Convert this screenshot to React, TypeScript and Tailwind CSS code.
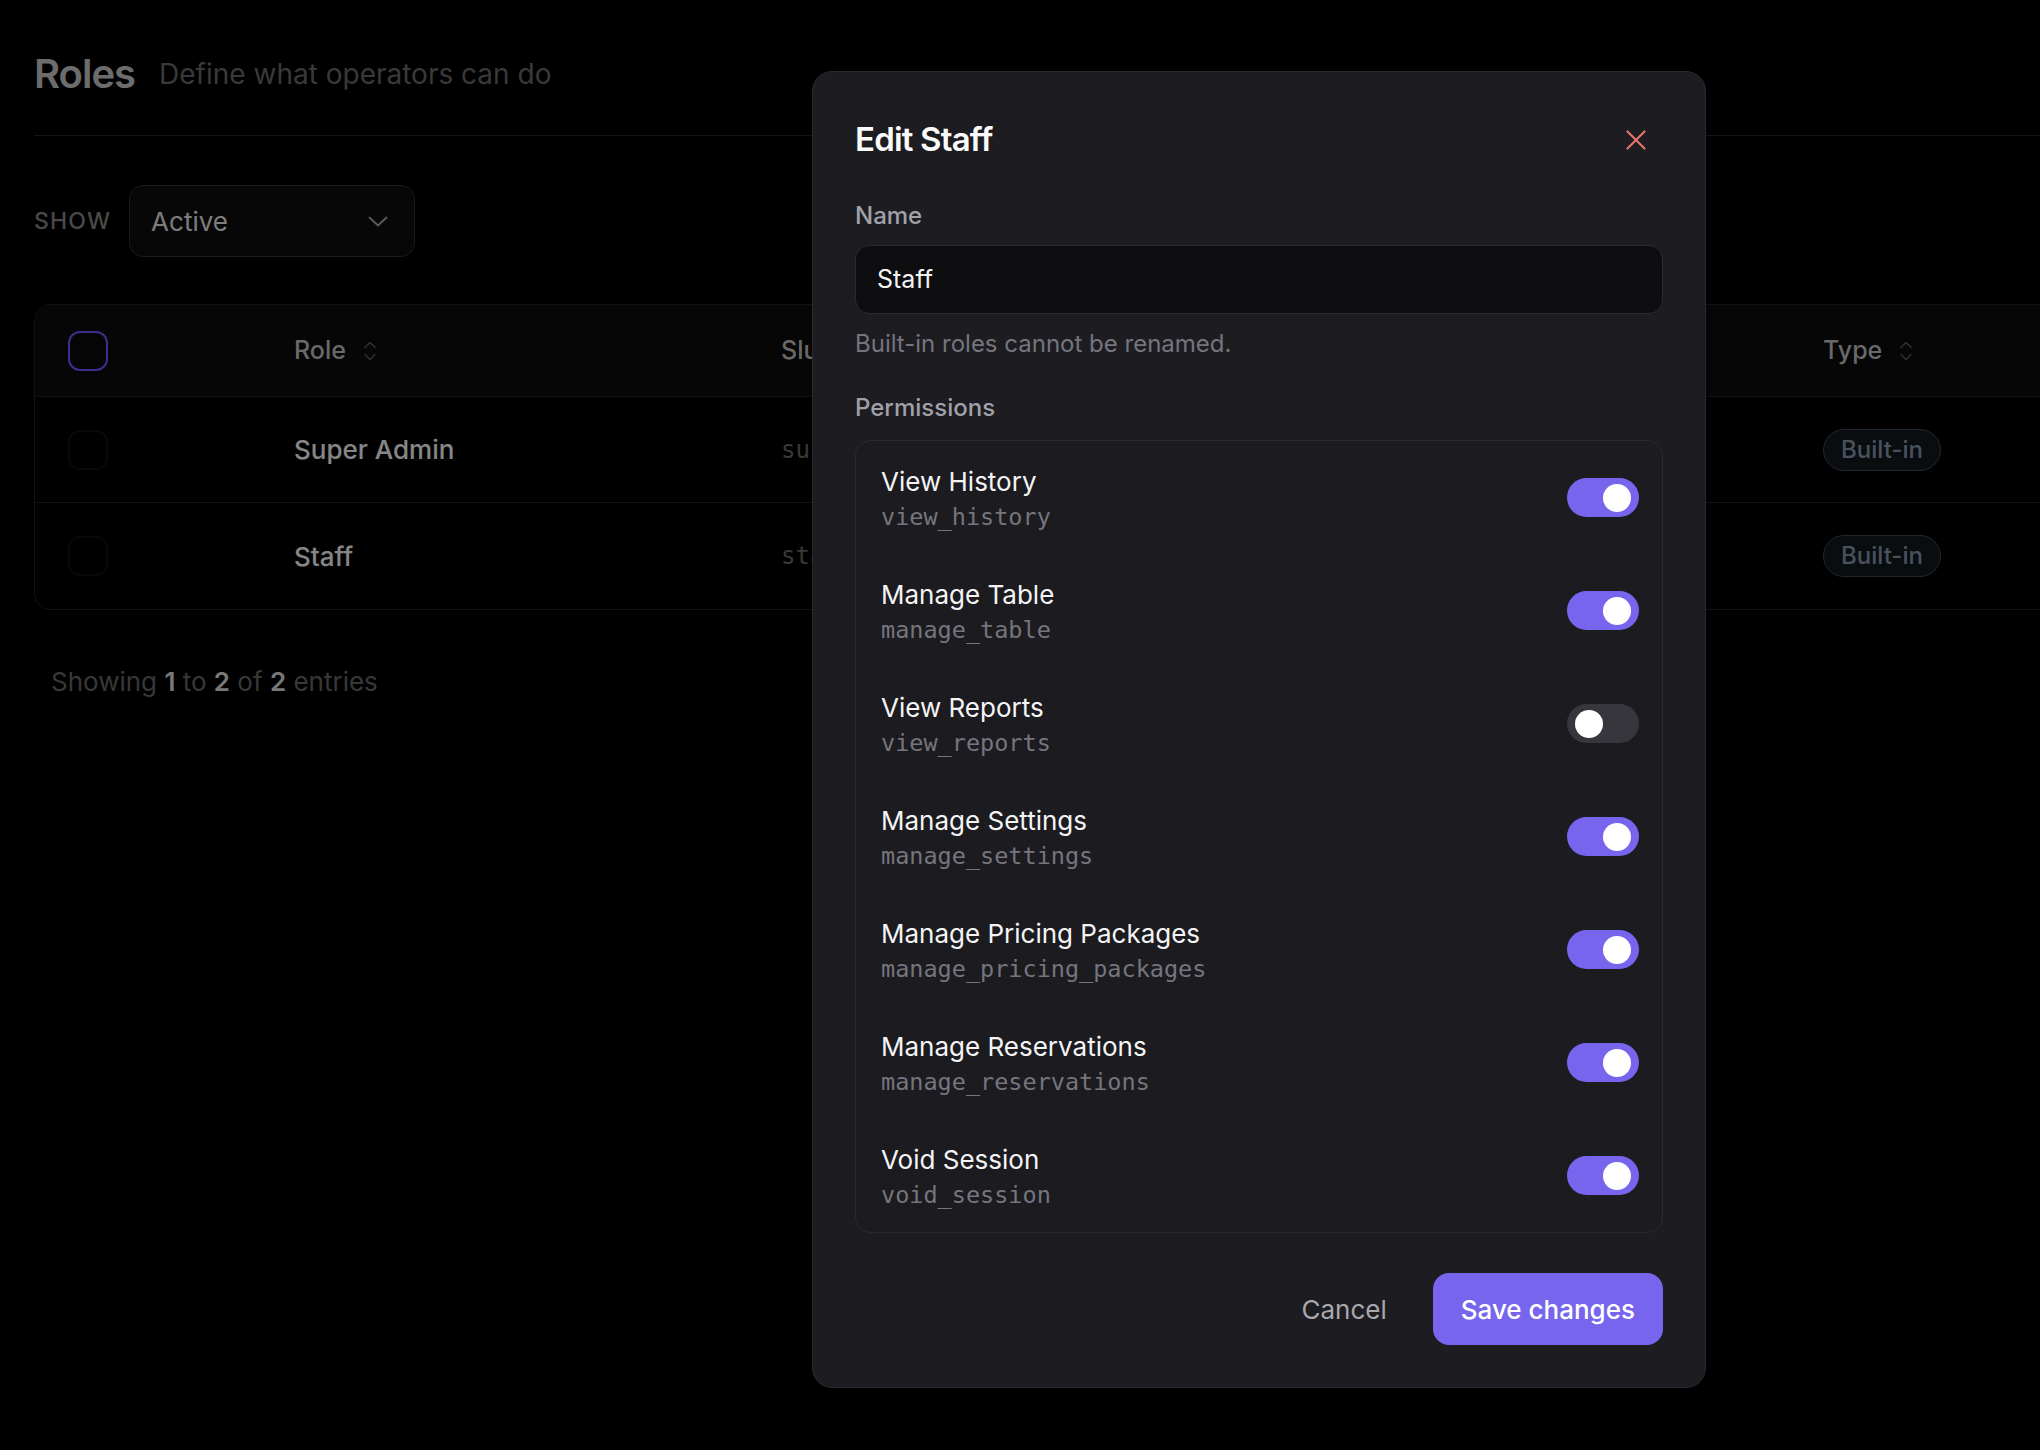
import React, { useState } from 'react';

const perms = [
    { label: 'View History', key: 'view_history', on: true },
    { label: 'Manage Table', key: 'manage_table', on: true },
    { label: 'View Reports', key: 'view_reports', on: false },
    { label: 'Manage Settings', key: 'manage_settings', on: true },
    { label: 'Manage Pricing Packages', key: 'manage_pricing_packages', on: true },
    { label: 'Manage Reservations', key: 'manage_reservations', on: true },
    { label: 'Void Session', key: 'void_session', on: true },
];

const roles = [
    { name: 'Super Admin', slug: 'super_admin' },
    { name: 'Staff', slug: 'staff' },
];

const SortIcon = () => (
    <svg width="16" height="24" viewBox="0 0 16 24" fill="none" stroke="currentColor" strokeWidth="1.6" strokeLinecap="round" strokeLinejoin="round">
        <path d="M3 8.5 8 3.5l5 5" />
        <path d="M3 15.5l5 5 5-5" />
    </svg>
);

const Toggle: React.FC<{ on: boolean; onClick: () => void }> = ({ on, onClick }) => (
    <button
        onClick={onClick}
        className={`w-[72px] h-[39px] rounded-full flex items-center px-[8px] shrink-0 ${on ? 'bg-[#7765ee] justify-end' : 'bg-[#36363c] justify-start'}`}
    >
        <span className="block w-[28px] h-[28px] rounded-full bg-white" />
    </button>
);

const App: React.FC = () => {
    const [state, setState] = useState(perms.map(p => p.on));

    return (
        <div className="relative w-[2040px] h-[1450px] overflow-hidden bg-black font-['Inter',sans-serif]">
            {/* page behind the dialog */}
            <div className="w-[2200px] pl-[34px]">
                <div className="flex items-center gap-[24px] pt-[50px] pb-[37px] border-b border-[#222]">
                    <h1 className="text-[40px] leading-[48px] font-semibold text-[#b4b4b4] tracking-tight">Roles</h1>
                    <p className="text-[28px] leading-[48px] text-[#606060]">Define what operators can do</p>
                </div>

                <div className="flex items-center gap-[18px] mt-[49px]">
                    <span className="text-[23px] tracking-wider text-[#7b7b7b] font-medium">SHOW</span>
                    <div className="w-[286px] h-[72px] rounded-[14px] border-[1.5px] border-[#2c2c2c] bg-[#0d0d0d] flex items-center justify-between pl-[21px] pr-[26px]">
                        <span className="text-[26px] text-[#d0d0d0]">Active</span>
                        <svg width="20" height="11" viewBox="0 0 20 11" fill="none" stroke="#969696" strokeWidth="1.8" strokeLinecap="round" strokeLinejoin="round">
                            <path d="M1.5 1.5 10 9.5l8.5-8" />
                        </svg>
                    </div>
                </div>

                <div className="mt-[47px] rounded-[16px] border-[1.5px] border-[#1e1e1e] overflow-hidden">
                    <div className="grid grid-cols-[259px_487px_1042px_1fr] items-center h-[92px] bg-[#0a0a0a] border-b-[1.5px] border-[#1e1e1e]">
                        <div className="pl-[33px]">
                            <div className="w-[40px] h-[40px] rounded-[12px] border-2 border-[#6050e8]" />
                        </div>
                        <div className="flex items-center gap-[16px] text-[25px] font-medium text-[#b0b0b0]">
                            Role <span className="text-[#505050]"><SortIcon /></span>
                        </div>
                        <div className="text-[25px] font-medium text-[#b0b0b0]">Slug</div>
                        <div className="flex items-center gap-[16px] text-[25px] font-medium text-[#b0b0b0]">
                            Type <span className="text-[#505050]"><SortIcon /></span>
                        </div>
                    </div>
                    {roles.map((r, i) => (
                        <div key={r.slug} className={`grid grid-cols-[259px_487px_1042px_1fr] items-center h-[106px] ${i === 0 ? 'border-b-[1.5px] border-[#1e1e1e]' : ''}`}>
                            <div className="pl-[33px]">
                                <div className="w-[40px] h-[40px] rounded-[12px] border-2 border-[#101010]" />
                            </div>
                            <div className="text-[26px] font-medium text-[#e0e0e0]">{r.name}</div>
                            <div className="text-[24px] text-[#606060] font-['DejaVu_Sans_Mono',monospace]">{r.slug}</div>
                            <div>
                                <span className="inline-flex items-center h-[42px] px-[17px] rounded-full border-[1.5px] border-[#39404c] bg-[#11161b] text-[24px] font-medium text-[#7b889e]">Built-in</span>
                            </div>
                        </div>
                    ))}
                </div>

                <p className="mt-[52px] pl-[17px] text-[26px] text-[#5e5e5e]">
                    Showing <span className="font-semibold text-[#c8c8c8]">1</span> to <span className="font-semibold text-[#c8c8c8]">2</span> of <span className="font-semibold text-[#c8c8c8]">2</span> entries
                </p>
            </div>

            {/* backdrop */}
            <div className="absolute inset-0 bg-black/40" />

            {/* dialog */}
            <div className="absolute left-[812px] top-[71px] w-[894px] rounded-[20px] border-[1.5px] border-[#28282e] bg-[#1c1c21] px-[42px] pt-[44px] pb-[42px] flex flex-col">
                <div className="flex items-center justify-between h-[48px]">
                    <h2 className="text-[33px] font-semibold text-[#fafafa] tracking-tight">Edit Staff</h2>
                    <button className="w-[40px] h-[40px] mr-[7px] flex items-center justify-center">
                        <svg width="20" height="20" viewBox="0 0 20 20" fill="none" stroke="#e2736b" strokeWidth="2.2" strokeLinecap="round">
                            <path d="M1.5 1.5l17 17M18.5 1.5l-17 17" />
                        </svg>
                    </button>
                </div>

                <label className="mt-[36px] text-[24px] leading-[32px] font-medium text-[#a1a1aa]">Name</label>
                <div className="mt-[13px] h-[69px] rounded-[14px] border-[1.5px] border-[#2a2a30] bg-[#0e0e11] flex items-center px-[21px]">
                    <span className="text-[25px] text-[#f4f4f5]">Staff</span>
                </div>
                <p className="mt-[14px] text-[24px] leading-[32px] text-[#75757e]">Built-in roles cannot be renamed.</p>

                <label className="mt-[32px] text-[24px] leading-[32px] font-medium text-[#a1a1aa]">Permissions</label>
                <div className="mt-[16px] rounded-[16px] border-[1.5px] border-[#29292f] bg-[#1b1b20] flex flex-col">
                    {perms.map((p, i) => (
                        <div key={p.key} className="h-[113px] flex items-center justify-between pl-[25px] pr-[23px]">
                            <div className="flex flex-col pt-[5px]">
                                <span className="text-[26px] leading-[32px] text-[#f4f4f5]">{p.label}</span>
                                <span className="mt-[2px] text-[23.5px] leading-[34px] text-[#75757e] font-['DejaVu_Sans_Mono',monospace]">{p.key}</span>
                            </div>
                            <Toggle on={state[i]} onClick={() => setState(s => s.map((v, j) => (j === i ? !v : v)))} />
                        </div>
                    ))}
                </div>

                <div className="mt-[40px] flex items-center justify-end gap-[18px]">
                    <button className="h-[72px] px-[28px] text-[26px] text-[#a8a8ae]">Cancel</button>
                    <button className="h-[72px] px-[28px] rounded-[16px] bg-[#7765ee] text-[26px] font-medium text-white">Save changes</button>
                </div>
            </div>
        </div>
    );
};

export default App;
